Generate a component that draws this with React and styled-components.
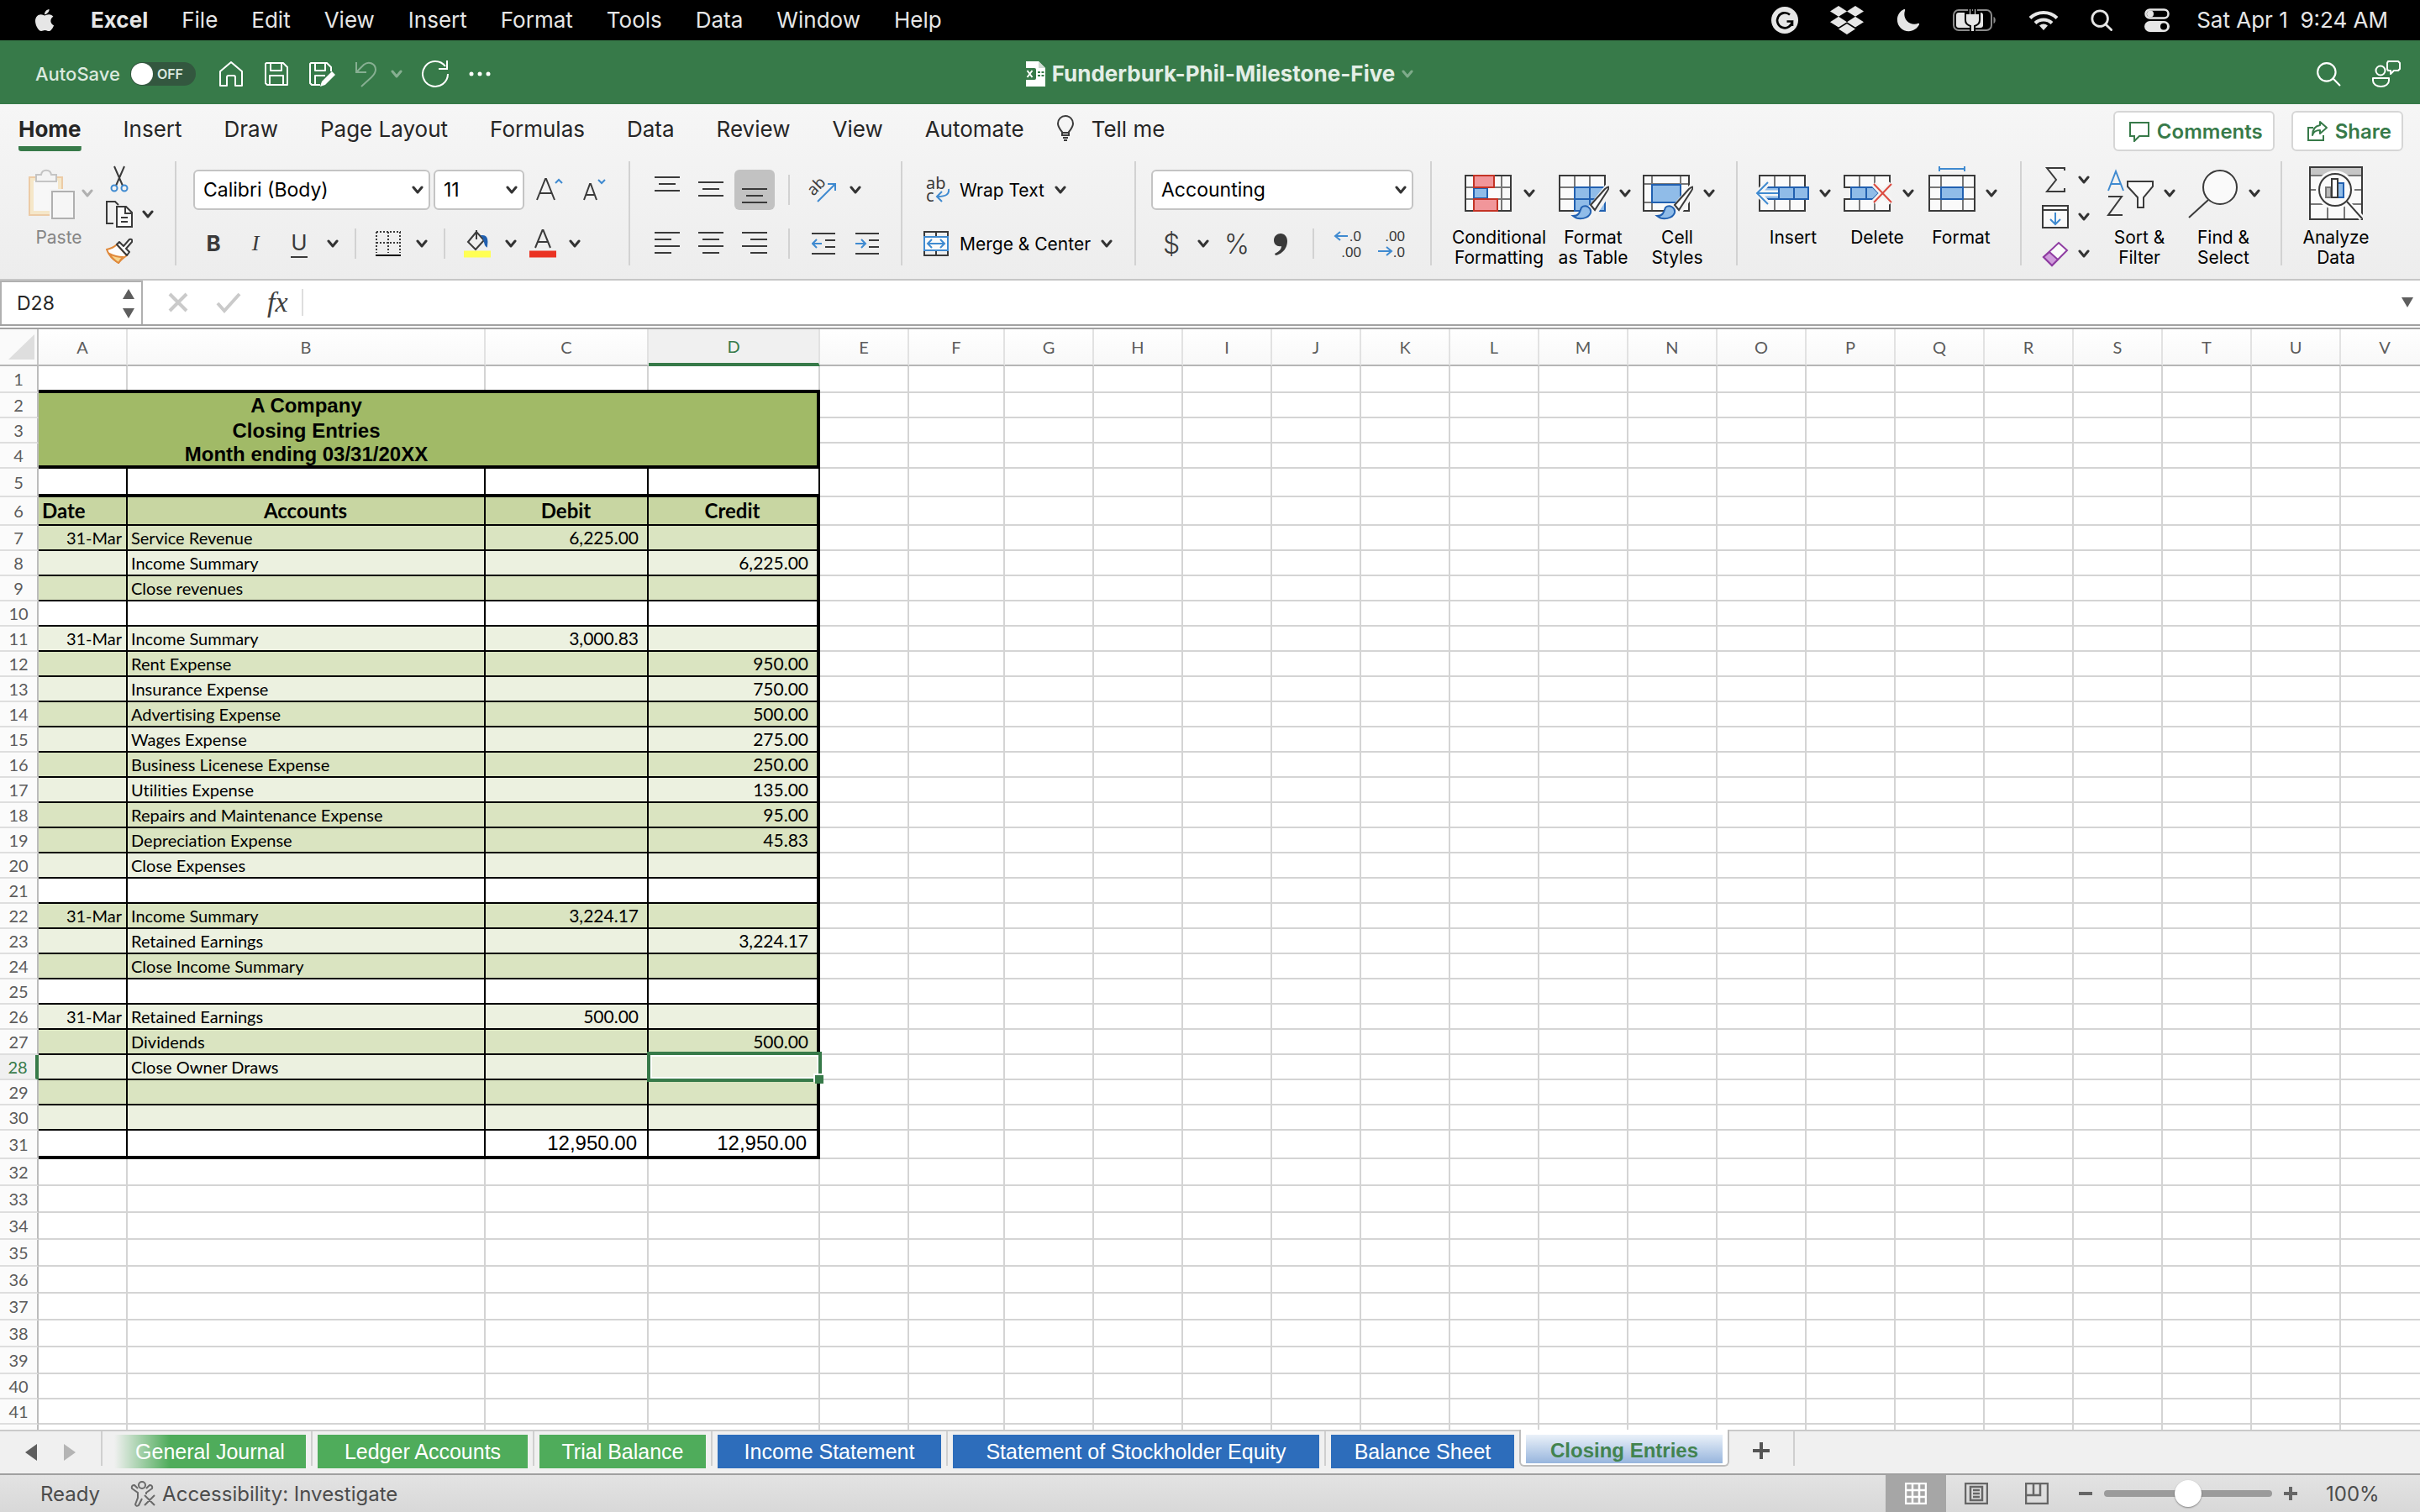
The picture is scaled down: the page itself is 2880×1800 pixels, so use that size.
import React from "react";
import styled, { createGlobalStyle, css } from "styled-components";
import { FaApple, FaDropbox } from "react-icons/fa";
import { IoMoon } from "react-icons/io5";

const ui = `Inter, "Liberation Sans", sans-serif`;
const calibri = `Lato, "Liberation Sans", sans-serif`;
const arial = `"Liberation Sans", Arial, sans-serif`;

const ink = "#3a3a3a";
const blue = "#3f8ad0";
const deepBlue = "#2160b0";
const paleBlue = "#90bce8";
const green = "#377a49";

const GlobalStyle = createGlobalStyle`
  * { box-sizing: border-box; }
  body { margin: 0; background: #fff; font-family: ${ui}; color: #262626; overflow: hidden; }
  button, input, select { font: inherit; color: inherit; }
  button { border: 0; padding: 0; background: none; }
  svg { display: block; flex: none; }
`;

const Page = styled.div`
  height: 100vh;
  display: flex;
  flex-direction: column;
`;

/* ---------- system menu bar ---------- */

const MenuBar = styled.nav`
  flex: none;
  height: 48px;
  padding: 0 38px 0 38px;
  display: flex;
  align-items: center;
  justify-content: space-between;
  background: #000;
  color: #e6e6e6;
  font-size: 26px;
`;

const MenuList = styled.div`
  display: flex;
  align-items: center;
  gap: 40px;
`;

const MenuItem = styled.button`
  line-height: 46px;
  font-weight: ${(p) => (p.$bold ? 700 : 400)};
`;

const StatusIcons = styled.div`
  display: flex;
  align-items: center;
  gap: 38px;
`;

const Clock = styled.time`
  margin-left: -6px;
  line-height: 46px;
  white-space: pre;
`;

/* ---------- window title bar ---------- */

const TitleBar = styled.header`
  flex: none;
  height: 76px;
  padding: 3px 22px 0 42px;
  display: grid;
  grid-template-columns: 1fr auto 1fr;
  align-items: center;
  background: ${green};
  color: #fff;
`;

const QuickAccess = styled.div`
  display: flex;
  align-items: center;
  gap: 22px;
`;

const AutoSave = styled.label`
  display: flex;
  align-items: center;
  gap: 12px;
  margin-right: 4px;
  font-size: 22px;
  font-weight: 500;
  color: #dbe9df;
`;

const SwitchBox = styled.span`
  display: grid;
  align-items: center;
  > * { grid-area: 1 / 1; }
`;

const Switch = styled.input`
  appearance: none;
  margin: 0;
  width: 78px;
  height: 28px;
  border-radius: 14px;
  background: #33573f;
  &::before {
    content: "";
    display: block;
    width: 26px;
    height: 26px;
    margin: 1px;
    border-radius: 50%;
    background: #fff;
  }
`;

const SwitchText = styled.span`
  padding-left: 32px;
  font-size: 16px;
  font-weight: 600;
`;

const IconButton = styled.button`
  display: flex;
  align-items: center;
  gap: ${(p) => p.$gap || 0}px;
  opacity: ${(p) => (p.$dim ? 0.4 : 1)};
`;

const DocTitle = styled.h1`
  margin: 0;
  display: flex;
  align-items: center;
  gap: 8px;
  font-size: 26px;
  font-weight: 700;
  color: #e3eee6;
`;

const TitleActions = styled.div`
  display: flex;
  justify-content: flex-end;
  align-items: center;
  gap: 36px;
`;

/* ---------- ribbon ---------- */

const RibbonShell = styled.section`
  flex: none;
  background: linear-gradient(#f6f6f6, #ededed);
  border-bottom: 2px solid #c6c6c6;
`;

const TabRow = styled.div`
  height: 68px;
  padding: 0 20px 0 22px;
  display: flex;
  align-items: flex-start;
  justify-content: space-between;
`;

const TabList = styled.div`
  display: flex;
  gap: 50px;
`;

const RibbonTab = styled.button`
  height: 56px;
  padding-top: 8px;
  display: flex;
  align-items: center;
  gap: 20px;
  font-size: 26px;
  border-bottom: 6px solid transparent;
  ${(p) =>
    p.$active &&
    css`
      font-weight: 700;
      background: linear-gradient(${green}, ${green}) bottom / 100% 6px no-repeat;
      background-origin: border-box;
      border-radius: 3px;
    `}
`;

const TellMe = styled(RibbonTab)`
  margin-left: -12px;
`;

const TabActions = styled.div`
  display: flex;
  gap: 20px;
  padding-top: 8px;
`;

const OutlineButton = styled.button`
  height: 48px;
  padding: 0 12px 0 16px;
  display: flex;
  align-items: center;
  gap: 8px;
  border: 2px solid #d6d6d6;
  border-radius: 6px;
  background: #fff;
  color: ${green};
  font-size: 24px;
  font-weight: 600;
`;

const Ribbon = styled.div`
  display: flex;
  height: 140px;
`;

const Group = styled.div`
  width: ${(p) => p.$w}px;
  height: 124px;
  padding-left: ${(p) => p.$pad || 20}px;
  display: flex;
  gap: 4px;
  border-right: ${(p) => (p.$last ? 0 : 2)}px solid #d2d2d2;
  flex: none;
`;

const Stack = styled.div`
  padding-top: 10px;
  display: flex;
  flex-direction: column;
  gap: 16px;
`;

const Line = styled.div`
  height: 48px;
  display: flex;
  align-items: center;
  gap: ${(p) => p.$gap || 0}px;
`;

const Rule = styled.i`
  width: 2px;
  height: 36px;
  margin: 0 12px;
  background: #d2d2d2;
`;

const Tool = styled.button`
  width: ${(p) => p.$w || 48}px;
  height: 48px;
  display: flex;
  align-items: center;
  justify-content: center;
  border-radius: 6px;
  color: ${ink};
  background: ${(p) => (p.$on ? "#c2c2c2" : "none")};
`;

const Drop = styled(Tool)`
  width: 28px;
  height: 40px;
`;

const Letter = styled.span`
  font-size: 26px;
  line-height: 32px;
  color: ${ink};
  font-weight: ${(p) => (p.$bold ? 700 : 400)};
  font-style: ${(p) => (p.$italic ? "italic" : "normal")};
  font-family: ${(p) => (p.$italic ? `"Liberation Serif", serif` : ui)};
  border-bottom: ${(p) => (p.$line ? 2 : 0)}px solid ${ink};
`;

const Symbol = styled.span`
  font-size: 32px;
  font-weight: 300;
  color: ${ink};
`;

const SelectBox = styled.span`
  width: ${(p) => p.$w}px;
  display: grid;
  align-items: center;
  > * { grid-area: 1 / 1; }
  > svg { justify-self: end; margin-right: 8px; pointer-events: none; }
`;

const Select = styled.select`
  appearance: none;
  width: 100%;
  height: 48px;
  padding: 0 10px;
  border: 2px solid #c4c4c4;
  border-radius: 6px;
  background: #fff;
  color: #000;
  font-size: 23px;
`;

const TextTool = styled.button`
  height: 48px;
  padding-left: 4px;
  display: flex;
  align-items: center;
  gap: 12px;
  color: #000;
  font-size: 21px;
`;

const BigTool = styled.button`
  width: ${(p) => p.$w || 96}px;
  padding-top: 2px;
  display: flex;
  flex-direction: column;
  align-items: center;
  justify-content: flex-start;
  color: ${(p) => (p.$dim ? "#858585" : "#000")};
`;

const BigIcon = styled.span`
  height: 72px;
  display: flex;
  align-items: center;
  gap: ${(p) => (p.$tight ? 8 : 12)}px;
`;

const BigLabel = styled.span`
  margin-top: 5px;
  font-size: 21px;
  line-height: 24px;
  white-space: pre-line;
  text-align: center;
`;

const MiniColumn = styled.div`
  padding-top: 2px;
  margin-left: ${(p) => p.$ml || 0}px;
  display: flex;
  flex-direction: column;
  gap: 4px;
`;

const MiniRow = styled.div`
  height: 40px;
  display: flex;
  align-items: center;
  gap: 4px;
`;

/* ---------- formula bar ---------- */

const FormulaBar = styled.div`
  flex: none;
  height: 58px;
  display: flex;
  align-items: center;
  background: #fff;
  border-bottom: 6px double #a2a2a2;
`;

const NameBox = styled.div`
  width: 170px;
  height: 52px;
  display: flex;
  align-items: center;
  border: 2px solid #b0b0b0;
  border-bottom: 0;
`;

const NameInput = styled.input`
  width: 130px;
  padding: 0 0 0 18px;
  border: 0;
  font-size: 23px;
`;

const Fx = styled.span`
  font: italic 34px/40px "Liberation Serif", serif;
  color: #404040;
`;

const FormulaTools = styled.div`
  padding: 0 16px 0 28px;
  display: flex;
  align-items: center;
  gap: 30px;
  height: 32px;
  border-right: 2px solid #dedede;
`;

const FormulaInput = styled.input`
  flex: 1;
  height: 40px;
  border: 0;
  font-size: 22px;
  background: #fff;
`;

const ExpandButton = styled.button`
  padding: 0 8px;
`;

/* ---------- sheet ---------- */

const Viewport = styled.main`
  flex: 1;
  min-height: 0;
  overflow: hidden;
  background: #fff;
`;

const Sheet = styled.table`
  width: 2892px;
  table-layout: fixed;
  border-collapse: separate;
  border-spacing: 0;
`;

const Corner = styled.td`
  padding: 0;
  border-right: 2px solid #c4c4c4;
  border-bottom: 2px solid #b5b5b5;
  background: #fafafa;
  > svg { margin-left: 10px; }
`;

const ColHead = styled.th`
  height: 44px;
  padding: 0;
  font: 400 20px/38px ${calibri};
  color: ${(p) => (p.$on ? green : "#5c5c5c")};
  background: ${(p) => (p.$on ? "#f0f0f0" : "linear-gradient(#fff, #f8f8f8)")};
  border-right: 2px solid #e2e2e2;
  border-bottom: ${(p) => (p.$on ? `4px solid ${green}` : "2px solid #b5b5b5")};
`;

const RowHead = styled.th`
  padding: 0;
  text-align: center;
  font: 400 20px/24px ${calibri};
  color: ${(p) => (p.$on ? green : "#5c5c5c")};
  background: ${(p) => (p.$on ? "#f0f0f0" : "#fbfbfb")};
  border-right: ${(p) => (p.$on ? `4px solid ${green}` : "2px solid #bcbcbc")};
  border-bottom: 2px solid #dedede;
`;

const Row = styled.tr`
  height: ${(p) => p.$h}px;
`;

const Cell = styled.td`
  position: relative;
  padding: 0 5px 0 4px;
  font: 400 20px/26px ${calibri};
  font-variant-ligatures: none;
  color: #000;
  white-space: nowrap;
  text-align: ${(p) => p.$align || "left"};
  background: ${(p) => p.$fill || "#fff"};
  border-right: ${(p) => p.$right || "2px solid #d4d4d4"};
  border-bottom: ${(p) => p.$bottom || "2px solid #d4d4d4"};
  ${(p) => p.$money && "padding-right: 10px; font-size: 21px;"}
  ${(p) => p.$kind === "title" && `font: 700 24px/26px ${arial};`}
  ${(p) => p.$kind === "head" && `font: 700 24px/30px ${calibri};`}
  ${(p) => p.$kind === "total" && `font: 400 24px/28px ${arial}; padding-right: 12px;`}
`;

const Selection = styled.span`
  position: absolute;
  inset: -4px -6px -4px -2px;
  border: 4px solid ${green};
  box-shadow: inset 0 0 0 2px #fff;
  z-index: 1;
  &::after {
    content: "";
    position: absolute;
    right: -6px;
    bottom: -6px;
    width: 10px;
    height: 10px;
    background: ${green};
    box-shadow: -2px -2px 0 #fff;
  }
`;

/* ---------- sheet tabs ---------- */

const SheetBar = styled.div`
  flex: none;
  height: 54px;
  display: flex;
  align-items: flex-start;
  background: #f0f0f0;
  border-top: 2px solid #cacaca;
  border-bottom: 2px solid #a0a0a0;
`;

const SheetNav = styled.div`
  width: 122px;
  height: 41px;
  padding: 8px 30px 0 30px;
  display: flex;
  justify-content: space-between;
  align-items: center;
  border-right: 2px solid #cfcfcf;
`;

const TabSlot = styled.div`
  height: 41px;
  padding: 0 6px;
  border-right: 2px solid #cfcfcf;
  ${(p) => p.$first && "padding-left: 14px;"}
  ${(p) => p.$bare && "border-right: 0;"}
`;

const SheetTab = styled.button`
  width: ${(p) => p.$w}px;
  height: 40px;
  margin-top: 4px;
  font: 400 25px/40px ${arial};
  color: #fff;
  text-align: center;
  background: ${(p) => (p.$blue ? "#2d6dbb" : "#4fac5b")};
  ${(p) => p.$fade && "background: linear-gradient(to right, #f0f0f0, #4fac5b 66px);"}
`;

const ActiveSlot = styled.div`
  height: 44px;
  margin-top: -2px;
  padding: 6px 6px 4px;
  background: #fff;
  border: 2px solid #bdbdbd;
  border-top: 0;
  border-radius: 0 0 6px 6px;
`;

const ActiveTab = styled.button`
  width: 234px;
  height: 34px;
  padding-top: 4px;
  font: 700 24px/30px ${arial};
  color: #42834f;
  background: linear-gradient(#eaf1f9, #97b5dd);
`;

const AddSheet = styled.button`
  width: 78px;
  height: 41px;
  padding-top: 4px;
  display: flex;
  align-items: center;
  justify-content: center;
  border-right: 2px solid #cfcfcf;
`;

/* ---------- status bar ---------- */

const StatusBar = styled.footer`
  flex: none;
  height: 44px;
  padding: 0 48px;
  display: flex;
  justify-content: space-between;
  align-items: center;
  background: linear-gradient(#e3e3e3, #d8d8d8);
  color: #4c4c4c;
  font-size: 24px;
`;

const StatusLeft = styled.div`
  display: flex;
  align-items: center;
  gap: 36px;
`;

const StatusRight = styled.div`
  height: 44px;
  display: flex;
  align-items: center;
`;

const StatusButton = styled.button`
  display: flex;
  align-items: center;
  gap: 6px;
`;

const ViewButton = styled.button`
  width: 72px;
  height: 44px;
  display: flex;
  align-items: center;
  justify-content: center;
  background: ${(p) => (p.$on ? "#a6a6a6" : "none")};
`;

const ZoomStep = styled.button`
  width: 16px;
  margin: 0 14px;
`;

const ZoomSlider = styled.input`
  appearance: none;
  width: 200px;
  height: 8px;
  margin: 0;
  border-radius: 4px;
  background: #9b9b9b;
  &::-webkit-slider-thumb {
    appearance: none;
    width: 32px;
    height: 32px;
    border-radius: 50%;
    background: #fff;
    box-shadow: 0 1px 2px rgba(0, 0, 0, 0.4);
  }
`;

const ZoomValue = styled.output`
  width: 84px;
  padding-left: 20px;
`;

/* ---------- icons ---------- */

const Svg = ({ w = 32, h = 32, stroke = ink, sw = 2, children }) => (
  <svg width={w} height={h} viewBox={`0 0 ${w} ${h}`} fill="none" stroke={stroke} strokeWidth={sw} aria-hidden="true">
    {children}
  </svg>
);

const Chevron = ({ color = "#333", sw = 3 }) => (
  <Svg w={14} h={12} stroke={color} sw={sw}><path d="M2 3l5 6 5-6" strokeLinecap="round" strokeLinejoin="round" /></Svg>
);

const Lines = ({ rows }) => (
  <Svg w={30} h={32}>
    {rows.map(([x, y, n]) => <path key={y} d={`M${x} ${y}h${n}`} />)}
  </Svg>
);

const Triangle = ({ dir, color = "#5e5e5e" }) => {
  const d = { left: "M14 0v20L0 10z", right: "M0 0v20l14-10z" }[dir];
  return <svg width="14" height="20" viewBox="0 0 14 20" fill={color} aria-hidden="true"><path d={d} /></svg>;
};

const Grammarly = () => (
  <svg width="32" height="32" viewBox="0 0 32 32" aria-hidden="true">
    <circle cx="16" cy="16" r="16" fill="#e6e6e6" />
    <path d="M22 9.500A9 9 0 1 0 25 17.500h-6.500M25 17.500v5.500" fill="none" stroke="#000" strokeWidth="2.600" />
  </svg>
);

const Battery = () => (
  <svg width="52" height="28" viewBox="0 0 52 28" aria-hidden="true">
    <rect x="1" y="2" width="45" height="24" rx="6" fill="none" stroke="#8a8a8a" strokeWidth="2" />
    <path d="M48.500 10v8c3-1 3-7 0-8z" fill="#8a8a8a" />
    <rect x="4" y="5" width="32" height="18" rx="3" fill="#e6e6e6" />
    <path d="M19 0v6h-4v8c0 4 3 6 6 7v7h5v-7c3-1 6-3 6-7V6h-4V0h-3v6h-3V0z" fill="#e6e6e6" stroke="#000" strokeWidth="2" />
  </svg>
);

const Wifi = () => (
  <svg width="36" height="26" viewBox="0 0 36 26" fill="none" stroke="#e6e6e6" strokeWidth="4" aria-hidden="true">
    <path d="M2 10.500a23 23 0 0 1 32 0M8 16.500a14.500 14.500 0 0 1 20 0" />
    <path d="M18 25l-5-5.500a7.500 7.500 0 0 1 10 0z" fill="#e6e6e6" stroke="none" />
  </svg>
);

const Magnifier = ({ size = 28, sw = 3, color = "#e6e6e6" }) => (
  <svg width={size} height={size} viewBox="0 0 28 28" fill="none" stroke={color} strokeWidth={sw} strokeLinecap="round" aria-hidden="true">
    <circle cx="12" cy="12" r="10" /><path d="M19 19l7.500 7.500" />
  </svg>
);

const ControlCenter = () => (
  <svg width="30" height="28" viewBox="0 0 30 28" aria-hidden="true">
    <rect x="1.500" y="1.500" width="27" height="10" rx="5" fill="none" stroke="#e6e6e6" strokeWidth="2.500" />
    <circle cx="7" cy="6.500" r="4" fill="#e6e6e6" />
    <rect x="0" y="15" width="30" height="13" rx="6.500" fill="#e6e6e6" />
    <circle cx="23" cy="21.500" r="4" fill="#000" />
  </svg>
);

const w = "#fff";
const HomeIcon = () => <Svg stroke={w}><path d="M3 13L16 2l13 11v17h-8V20q0-2-2-2h-6q-2 0-2 2v10H3z" strokeLinejoin="round" /></Svg>;
const SaveIcon = () => <Svg stroke={w}><path d="M4 3h20l5 5v21H5l-2-2V4zM9 3v9h13V3M8 29V18h16v11" strokeLinejoin="round" /></Svg>;
const SaveAsIcon = () => (
  <Svg stroke={w}><path d="M14 29H4l-2-2V4l1-1h19l5 5v5M8 3v9h12V3M8 29V18h12" strokeLinejoin="round" /><path d="M28 13l4 4-12 12-6 2 2-6z" fill={w} stroke="none" /></Svg>
);
const UndoIcon = () => <Svg w={28} stroke={w}><path d="M3 2v12h12M3 14L12 5c6-5 14-1 14 6 0 4-2 6-5 9L9 31" /></Svg>;
const RedoIcon = () => <Svg w={34} h={34} stroke={w} sw={2}><path d="M29 8A15 15 0 1 0 32 17M31 1v10H21" /></Svg>;
const MoreIcon = () => <svg width="28" height="8" viewBox="0 0 28 8" fill="#fff" aria-hidden="true"><circle cx="4" cy="4" r="2.500" /><circle cx="14" cy="4" r="2.500" /><circle cx="24" cy="4" r="2.500" /></svg>;
const FileIcon = () => (
  <svg width="26" height="30" viewBox="0 0 26 30" aria-hidden="true">
    <path d="M3 0h15l8 8v22H3z" fill="#fff" /><path d="M18 0v8h8z" fill="#cfdcd2" />
    <rect x="0" y="8" width="15" height="14" rx="2" fill={green} />
    <path d="M4.500 11l6 8M10.500 11l-6 8" stroke="#fff" strokeWidth="2" />
    <path d="M17 12h3v2h-3zM21.500 12h3v2h-3zM17 16h3v2h-3zM21.500 16h3v2h-3z" fill={green} />
  </svg>
);
const PeopleIcon = () => (
  <Svg w={36} h={34} stroke={w}><circle cx="11" cy="13" r="5.500" /><path d="M2 22h19v3c0 4-4 7-9.500 7S2 29 2 25zM20 2h12l2 2v7l-2 2h-5l-4 4v-4h-3l-1-2V4z" strokeLinejoin="round" /></Svg>
);
const BulbIcon = () => (
  <Svg w={22} h={32}><path d="M7 24v-4C4 16 2 14 2 10a9 9 0 0 1 18 0c0 4-2 6-5 10v4zM7 21h8M8 27h6M9 30h4" /></Svg>
);
const CommentIcon = () => <Svg w={26} h={26} stroke={green}><path d="M2 3h22v16H13l-6 6v-6H2z" /></Svg>;
const ShareIcon = () => (
  <Svg w={26} h={26} stroke={green}><path d="M8 9H2v15h18v-6" /><path d="M16 2l8 7-8 7v-4c-5 0-8 2-9 6 0-7 3-11 9-12z" strokeLinejoin="round" /></Svg>
);

const PasteIcon = () => (
  <Svg w={60} h={72}>
    <path d="M6 17h39v45H6z" stroke="#eccba6" fill="#f5e7c9" />
    <path d="M11 21h29v36H11z" fill="#f7f7f7" stroke="none" />
    <path d="M14 22v-8h6c1-7 11-7 12 0h6v8z" fill="#f4f4f4" stroke="#c4c4c4" />
    <path d="M30 31h31v36H30z" fill="#f4f4f4" stroke="none" />
    <path d="M33 34h26v32H33z" fill="#f6f6f6" stroke="#b0b0b0" />
  </Svg>
);
const CutIcon = () => (
  <Svg><path d="M10 1l10 23M22 1L12 24" /><circle cx="10" cy="27" r="3.500" stroke={blue} /><circle cx="22" cy="27" r="3.500" stroke={blue} /></Svg>
);
const CopyIcon = () => (
  <Svg><path d="M9 27H1V1h10l4 4" /><path d="M13 7h11l7 7v17H13z" fill="#fafafa" /><path d="M23 7v8h8M18 20h8M18 25h8" /></Svg>
);
const PainterIcon = () => (
  <Svg>
    <path d="M13 9C10 12 6 14 1 15c2 6 7 12 14 16 3-4 6-6 10-9z" fill="#fdfdfd" stroke="#e08a3c" />
    <path d="M4 20c6 3 11 4 16 4l-5 7c-5-3-8-6-11-11z" fill="#f6d58f" stroke="#e08a3c" />
    <path d="M13 9l3-3 5 5 7-8q4-1 3 3l-7 8 4 4-3 4z" fill="#fafafa" strokeLinejoin="round" />
  </Svg>
);
const GrowFont = ({ down }) => (
  <Svg w={34} h={34}>{down
    ? <><path d="M4 29l7-19h1l7 19M7 23h9" /><path d="M21 5l4 4 4-4" stroke={blue} /></>
    : <><path d="M2 29L12 4h1l10 25M6 21h13" /><path d="M24 9l4-4 4 4" stroke={blue} /></>}
  </Svg>
);
const BorderIcon = () => (
  <Svg><path d="M2 2h29M2 15h29M2 2v25M16 2v25M30 2v25" strokeDasharray="2 2" /><path d="M1 30h30" stroke="#000" /></Svg>
);
const FillIcon = () => (
  <Svg w={34} h={34}><path d="M16 3L6 15l9 9 10-11zM16 1v11" /><path d="M23 8c6 0 6 6 5 12-3-2-1-8-5-12z" fill={deepBlue} stroke={deepBlue} /><path d="M1 25.500h32v8H1z" fill="#ffff54" stroke="none" /></Svg>
);
const FontColorIcon = () => (
  <Svg w={34} h={34}><path d="M8 22L16.500 1h1L26 22M11 15h12" /><path d="M1 25.500h32v8H1z" fill="#ea3323" stroke="none" /></Svg>
);
const OrientIcon = () => (
  <Svg w={44} h={48}>
    <text x="10" y="32" transform="rotate(-45 10 32)" fontFamily="Noto Sans" fontSize="19" fill={ink} stroke="none">ab</text>
    <path d="M15 38L35 18M27 17h9v8" stroke={blue} />
  </Svg>
);
const IndentIcon = ({ right }) => (
  <Svg w={28} h={32}><path d="M0 4h28M0 28h28M16 12h12M16 20h12" /><path d={right ? "M0 16h11M7 11l5 5-5 5" : "M1 16h11M6 11l-5 5 5 5"} stroke={blue} /></Svg>
);
const WrapIcon = () => (
  <Svg w={32} h={44}>
    <text fontFamily="Noto Sans" fontSize="20" fill={ink} stroke="none"><tspan x="4" y="21">ab</tspan><tspan x="4" y="36">c</tspan></text>
    <path d="M31 21c1 6-3 9-13 9M23 24l-6 6 6 6" stroke={blue} />
  </Svg>
);
const MergeIcon = () => (
  <Svg w={32} h={32}><path d="M2 2h28v28H2zM16 2v6M16 24v6" /><path d="M2 8h28v16H2z" fill="#fafafa" stroke={blue} /><path d="M6 16h20M11 11l-5 5 5 5M21 11l5 5-5 5" stroke={blue} /></Svg>
);
const CommaIcon = () => <svg width="20" height="28" viewBox="0 0 20 28" fill={ink} aria-hidden="true"><path d="M3 26c7-3 8-7 8-9-5 1-9-2-9-7s4-8 8-8c5 0 8 4 8 9 0 8-5 15-14 17z" /></svg>;
const DecimalIcon = ({ less }) => (
  <Svg w={34} h={38}>
    <text textAnchor="end" fontFamily="Liberation Sans" fontSize="17" fill={ink} stroke="none">
      <tspan x="33" y="16">{less ? ".00" : ".0"}</tspan>
      <tspan x="33" y="35">{less ? ".0" : ".00"}</tspan>
    </text>
    <path d={less ? "M1 28h15M11 23l6 5-6 5" : "M17 10H2M8 5l-6 5 6 5"} stroke={blue} />
  </Svg>
);

const Brush = () => (
  <>
    <path d="M28 63c6 2 9-1 10-5L62 28c3-3 6-1 4 3L48 58c-1 6-9 10-20 5z" fill="#f3f3f3" stroke="#f3f3f3" strokeWidth="6" />
    <path d="M42 50L59 31c5-4 6-3 3 2L47 56z" fill="#fafafa" />
    <path d="M21 63c7 0 8-4 10-10 5-4 12 0 11 6-2 7-14 10-21 4z" fill={paleBlue} stroke={deepBlue} />
  </>
);
const CondFormatIcon = () => (
  <Svg w={60} h={72}>
    <path d="M3 15h54v42H3zM13 15v42M46 15v42M3 29h54M3 43h54" fill="#fafafa" stroke="#777" />
    <path d="M3 15h54v42H3z" />
    <path d="M13 30h16v12H13z" fill={paleBlue} stroke={deepBlue} />
    <path d="M13 15h24v14H13zM13 43h28v14H13z" fill="#f1969a" stroke="#c43426" />
  </Svg>
);
const TableFormatIcon = () => (
  <Svg w={64} h={72}>
    <path d="M5 15h54v42H5zM23 15v42M41 15v42M5 29h54M5 43h54" fill="#fafafa" stroke="#777" />
    <path d="M5 15h54v42H5z" />
    <path d="M23 29h36v28H23zM41 29v28M23 43h36" fill={paleBlue} stroke={deepBlue} />
    <Brush />
  </Svg>
);
const CellStyleIcon = () => (
  <Svg w={64} h={72}>
    <path d="M5 15h54v42H5zM15 15v42M49 15v42M5 25h54M5 47h54" fill="#fafafa" stroke="#777" />
    <path d="M5 15h54v42H5z" />
    <path d="M15 26h34v21H15z" fill={paleBlue} stroke={deepBlue} />
    <Brush />
  </Svg>
);
const InsertCellsIcon = () => (
  <Svg w={64} h={72}>
    <path d="M5 15h54v42H5zM23 15v42M41 15v42" fill="#fafafa" stroke="#777" /><path d="M5 15h54v42H5z" />
    <path d="M8 29h55v14H8zM28 29v14M46 29v14" fill={paleBlue} stroke={deepBlue} />
    <path d="M16 22L3 36l13 14M3 36h24" stroke="#f6f6f6" strokeWidth="7" /><path d="M15 23L2 36l13 13M2 36h25" stroke={blue} />
  </Svg>
);
const DeleteCellsIcon = () => (
  <Svg w={62} h={72}>
    <path d="M5 15h54v42H5zM23 15v42M41 15v42" fill="#fafafa" stroke="#777" /><path d="M5 15h54v42H5z" />
    <path d="M3 30h60v12H3z" fill="#f2f2f2" stroke="none" />
    <path d="M5 29h8M5 43h8" /><path d="M13 29h26l7 7-7 7H13zM31 29v14" fill={paleBlue} stroke={deepBlue} />
    <path d="M40 25l21 22M61 25L40 47" stroke="#f4f4f4" strokeWidth="7" /><path d="M40 25l21 22M61 25L40 47" stroke="#dc4b40" />
  </Svg>
);
const FormatCellsIcon = () => (
  <Svg w={60} h={72}>
    <path d="M5 15h54v42H5zM19 15v42M45 15v42M5 29h54M5 43h54" fill="#fafafa" stroke="#777" /><path d="M5 15h54v42H5z" />
    <path d="M19 29h26v14H19z" fill={paleBlue} stroke={deepBlue} /><path d="M17 7h30M17 4v6M47 4v6" stroke={blue} />
  </Svg>
);
const SumIcon = () => <Svg><path d="M27 5V2H6l11 14L6 30h21v-4" /></Svg>;
const FillDownIcon = () => <Svg><path d="M1 3h30v26H1z" fill="#fafafa" /><path d="M1 8h30" /><path d="M16 11v14M10 19l6 6 6-6" stroke={blue} /></Svg>;
const EraserIcon = () => <Svg stroke="#8f3da2"><path d="M20 3l10 9-18 18-10-10z" fill="#fafafa" /><path d="M9 14l10 9-7 7L2 20z" fill="#cf9bdb" /></Svg>;
const SortIcon = () => (
  <Svg w={60} h={72}><path d="M6 33l9-23 9 23M9 25h12" stroke={blue} /><path d="M6 40h16L6 62h17" /><path d="M29 22h30v6L48 41v12h-7V41L29 28z" fill="#fafafa" /></Svg>
);
const FindIcon = () => <Svg w={62} h={72}><circle cx="40" cy="29" r="20" fill="#fafafa" /><path d="M26 44L3 65" /></Svg>;
const AnalyzeIcon = () => (
  <Svg w={64} h={72}>
    <path d="M1 5h62v62H1z" fill="#fafafa" /><path d="M2 6h60v9H2z" fill="#c6c6c6" stroke="none" /><path d="M1 15h62M1 32h62M1 49h62M22 49v18M42 49v18" stroke="#777" />
    <path d="M1 5h62v62H1z" />
    <circle cx="31" cy="32" r="23" fill="#fafafa" stroke="none" /><circle cx="31" cy="32" r="19" fill="#fafafa" /><path d="M45 47l18 19" stroke="#fafafa" strokeWidth="7" /><path d="M45 46l18 20" />
    <path d="M20 29h6v12h-6z" fill="#bbb" stroke="#777" /><path d="M34 24h7v17h-7z" fill={paleBlue} stroke={deepBlue} /><path d="M27 19h7v22h-7z" fill="#fff" />
  </Svg>
);
const AccessIcon = () => (
  <Svg w={32} h={32} stroke="#6a6a6a"><circle cx="14" cy="6" r="4" /><path d="M9 10L5 6q-4 0-3 4l7 5v6l-3 8q1 3 4 1l4-8M19 10l4-4q4 0 3 4l-7 5v2M17 18l12 12M29 18L17 30" /></Svg>
);

/* ---------- data ---------- */

const columns = [106, 426, 194, 204, 106, 114, ...Array(16).fill(106)];
const letters = "ABCDEFGHIJKLMNOPQRSTUV".split("");
const dark = "#dae4c1";
const light = "#ecf1e0";

const entries = {
  7: [dark, "31-Mar", "Service Revenue", "6,225.00", ""],
  8: [light, "", "Income Summary", "", "6,225.00"],
  9: [dark, "", "Close revenues", "", ""],
  10: ["#fff", "", "", "", ""],
  11: [light, "31-Mar", "Income Summary", "3,000.83", ""],
  12: [dark, "", "Rent Expense", "", "950.00"],
  13: [light, "", "Insurance Expense", "", "750.00"],
  14: [dark, "", "Advertising Expense", "", "500.00"],
  15: [light, "", "Wages Expense", "", "275.00"],
  16: [dark, "", "Business Licenese Expense", "", "250.00"],
  17: [light, "", "Utilities Expense", "", "135.00"],
  18: [dark, "", "Repairs and Maintenance Expense", "", "95.00"],
  19: [dark, "", "Depreciation Expense", "", "45.83"],
  20: [light, "", "Close Expenses", "", ""],
  21: ["#fff", "", "", "", ""],
  22: [dark, "31-Mar", "Income Summary", "3,224.17", ""],
  23: [light, "", "Retained Earnings", "", "3,224.17"],
  24: [dark, "", "Close Income Summary", "", ""],
  25: ["#fff", "", "", "", ""],
  26: [light, "31-Mar", "Retained Earnings", "500.00", ""],
  27: [dark, "", "Dividends", "", "500.00"],
  28: [light, "", "Close Owner Draws", "", ""],
  29: [dark, "", "", "", ""],
  30: [light, "", "", "", ""],
  31: ["#fff", "", "", "12,950.00", "12,950.00"],
};

const titles = { 2: "A Company", 3: "Closing Entries", 4: "Month ending 03/31/20XX" };
const headings = ["Date", "Accounts", "Debit", "Credit"];

const rowHeight = (n) => {
  if (n === 1) return 32;
  if (n === 5 || n === 6 || n === 31) return 34;
  if (n >= 32 && n <= 39) return 32;
  return 30;
};

const thick = "4px solid #000";
const thin = "2px solid #000";
const edgeLine = (color) => `linear-gradient(${color}, ${color}) right / 2px 100% no-repeat #fff`;

function ledgerCell(n, c) {
  if (n === 1) return { $right: "0", $fill: edgeLine("#d4d4d4"), $bottom: thick };
  if (n <= 4) {
    return {
      $kind: "title", $fill: "#a1ba67", $align: "center",
      $right: c === 3 ? thick : "0", $bottom: n === 4 ? thick : "0",
      children: c === 1 ? titles[n] : null,
    };
  }
  if (n === 5) return { $right: thin, $bottom: thick };
  const $right = c === 3 ? thick : thin;
  if (n === 6) {
    return { $kind: "head", $fill: "#c8d6a2", $align: c ? "center" : "left", $right, $bottom: thin, children: headings[c] };
  }
  const [fill, ...values] = entries[n];
  return {
    $kind: n === 31 ? "total" : "body", $fill: fill, $align: c === 1 ? "left" : "right", $money: c > 1,
    $right, $bottom: n === 31 ? thick : thin, children: values[c],
  };
}

const sheets = [
  { name: "General Journal", w: 228, first: true },
  { name: "Ledger Accounts", w: 250 },
  { name: "Trial Balance", w: 198 },
  { name: "Income Statement", w: 266, blue: true },
  { name: "Statement of Stockholder Equity", w: 436, blue: true },
  { name: "Balance Sheet", w: 218, blue: true, last: true },
];

const menus = ["File", "Edit", "View", "Insert", "Format", "Tools", "Data", "Window", "Help"];
const tabs = ["Insert", "Draw", "Page Layout", "Formulas", "Data", "Review", "View", "Automate"];

/* ---------- composed parts ---------- */

const DropButton = ({ label }) => <Drop aria-label={label}><Chevron /></Drop>;

const Picker = ({ label, value, width }) => (
  <SelectBox $w={width}>
    <Select aria-label={label} defaultValue={value}><option>{value}</option></Select>
    <Chevron />
  </SelectBox>
);

const Big = ({ icon, label, width, noDrop, dim }) => (
  <BigTool $w={width} $dim={dim}>
    <BigIcon $tight={dim}>{icon}{!noDrop && <Chevron color={dim ? "#b0b0b0" : undefined} />}</BigIcon>
    <BigLabel>{label}</BigLabel>
  </BigTool>
);

function RibbonPanel() {
  return (
    <Ribbon>
      <Group $w={210} $pad={26}>
        <Big icon={<PasteIcon />} label="Paste" width={88} dim />
        <MiniColumn $ml={8}>
          <MiniRow><IconButton aria-label="Cut"><CutIcon /></IconButton></MiniRow>
          <MiniRow><IconButton aria-label="Copy"><CopyIcon /></IconButton><DropButton label="Copy options" /></MiniRow>
          <MiniRow><IconButton aria-label="Format painter"><PainterIcon /></IconButton></MiniRow>
        </MiniColumn>
      </Group>
      <Group $w={540}>
        <Stack>
          <Line $gap={4}>
            <Picker label="Font" value="Calibri (Body)" width={282} />
            <Picker label="Font size" value="11" width={108} />
            <Tool aria-label="Increase font size" $w={52}><GrowFont /></Tool>
            <Tool aria-label="Decrease font size"><GrowFont down /></Tool>
          </Line>
          <Line>
            <Tool><Letter $bold>B</Letter></Tool>
            <Tool $w={52}><Letter $italic>I</Letter></Tool>
            <Tool $w={52}><Letter $line>U</Letter></Tool>
            <DropButton label="Underline options" />
            <Rule />
            <Tool aria-label="Borders" $w={52}><BorderIcon /></Tool>
            <DropButton label="Border options" />
            <Rule />
            <Tool aria-label="Fill color" $w={52}><FillIcon /></Tool>
            <DropButton label="Fill options" />
            <Tool aria-label="Font color"><FontColorIcon /></Tool>
            <DropButton label="Font color options" />
          </Line>
        </Stack>
      </Group>
      <Group $w={324}>
        <Stack>
          <Line $gap={4}>
            <Tool aria-label="Top align"><Lines rows={[[0, 1, 30], [5, 9, 20], [0, 17, 30]]} /></Tool>
            <Tool aria-label="Middle align"><Lines rows={[[0, 7, 30], [5, 15, 20], [0, 23, 30]]} /></Tool>
            <Tool aria-label="Bottom align" $on><Lines rows={[[0, 15, 30], [5, 23, 20], [0, 31, 30]]} /></Tool>
            <Rule />
            <Line>
              <Tool aria-label="Orientation"><OrientIcon /></Tool>
              <DropButton label="Orientation options" />
            </Line>
          </Line>
          <Line $gap={4}>
            <Tool aria-label="Align left"><Lines rows={[[0, 3, 30], [0, 11, 20], [0, 19, 30], [0, 27, 20]]} /></Tool>
            <Tool aria-label="Center"><Lines rows={[[0, 3, 30], [5, 11, 20], [0, 19, 30], [5, 27, 20]]} /></Tool>
            <Tool aria-label="Align right"><Lines rows={[[0, 3, 30], [10, 11, 20], [0, 19, 30], [10, 27, 20]]} /></Tool>
            <Rule />
            <Tool aria-label="Decrease indent"><IndentIcon /></Tool>
            <Tool aria-label="Increase indent"><IndentIcon right /></Tool>
          </Line>
        </Stack>
      </Group>
      <Group $w={278}>
        <Stack>
          <TextTool><WrapIcon />Wrap Text<Chevron /></TextTool>
          <TextTool><MergeIcon />Merge &amp; Center<Chevron /></TextTool>
        </Stack>
      </Group>
      <Group $w={352} $pad={18}>
        <Stack>
          <Picker label="Number format" value="Accounting" width={312} />
          <Line>
            <Tool><Symbol>$</Symbol></Tool>
            <DropButton label="Currency options" />
            <Tool $w={52}><Symbol>%</Symbol></Tool>
            <Tool aria-label="Comma style" $w={52}><CommaIcon /></Tool>
            <Rule />
            <Tool aria-label="Increase decimal" $w={56}><DecimalIcon /></Tool>
            <Tool aria-label="Decrease decimal"><DecimalIcon less /></Tool>
          </Line>
        </Stack>
      </Group>
      <Group $w={364}>
        <Big icon={<CondFormatIcon />} label={"Conditional\nFormatting"} width={120} />
        <Big icon={<TableFormatIcon />} label={"Format\nas Table"} />
        <Big icon={<CellStyleIcon />} label={"Cell\nStyles"} />
      </Group>
      <Group $w={338} $pad={18}>
        <Big icon={<InsertCellsIcon />} label="Insert" />
        <Big icon={<DeleteCellsIcon />} label="Delete" />
        <Big icon={<FormatCellsIcon />} label="Format" />
      </Group>
      <Group $w={310} $pad={24}>
        <MiniColumn>
          <MiniRow><IconButton aria-label="AutoSum"><SumIcon /></IconButton><DropButton label="AutoSum options" /></MiniRow>
          <MiniRow><IconButton aria-label="Fill"><FillDownIcon /></IconButton><DropButton label="Fill down options" /></MiniRow>
          <MiniRow><IconButton aria-label="Clear"><EraserIcon /></IconButton><DropButton label="Clear options" /></MiniRow>
        </MiniColumn>
        <Big icon={<SortIcon />} label={"Sort &\nFilter"} />
        <Big icon={<FindIcon />} label={"Find &\nSelect"} />
      </Group>
      <Group $w={120} $pad={16} $last>
        <Big icon={<AnalyzeIcon />} label={"Analyze\nData"} noDrop />
      </Group>
    </Ribbon>
  );
}

function Grid() {
  const rows = Array.from({ length: 42 }, (_, i) => i + 1);
  return (
    <Sheet>
      <colgroup>
        <col width={46} />
        {columns.map((width, i) => <col key={i} width={width} />)}
      </colgroup>
      <thead>
        <tr>
          <Corner><svg width="32" height="32" viewBox="0 0 32 32" aria-hidden="true"><path d="M31 1v30H0z" fill="#dedede" /></svg></Corner>
          {letters.map((l) => <ColHead key={l} scope="col" $on={l === "D"}>{l}</ColHead>)}
        </tr>
      </thead>
      <tbody>
        {rows.map((n) => (
          <Row key={n} $h={rowHeight(n)}>
            <RowHead scope="row" $on={n === 28}>{n < 42 ? n : null}</RowHead>
            {letters.map((l, c) => {
              const { children, ...look } = c < 4 && n <= 31 ? ledgerCell(n, c) : {};
              return <Cell key={l} {...look}>{children}{n === 28 && l === "D" && <Selection />}</Cell>;
            })}
          </Row>
        ))}
      </tbody>
    </Sheet>
  );
}

export default function App() {
  return (
    <Page>
      <GlobalStyle />
      <MenuBar>
        <MenuList>
          <FaApple size={30} />
          <MenuItem $bold>Excel</MenuItem>
          {menus.map((m) => <MenuItem key={m}>{m}</MenuItem>)}
        </MenuList>
        <StatusIcons>
          <Grammarly />
          <FaDropbox size={40} />
          <IoMoon size={30} />
          <Battery />
          <Wifi />
          <Magnifier size={26} />
          <ControlCenter />
          <Clock>{"Sat Apr 1  9:24 AM"}</Clock>
        </StatusIcons>
      </MenuBar>

      <TitleBar>
        <QuickAccess>
          <AutoSave htmlFor="autosave">
            AutoSave
            <SwitchBox><Switch id="autosave" type="checkbox" /><SwitchText>OFF</SwitchText></SwitchBox>
          </AutoSave>
          <IconButton aria-label="Home"><HomeIcon /></IconButton>
          <IconButton aria-label="Save"><SaveIcon /></IconButton>
          <IconButton aria-label="Save as"><SaveAsIcon /></IconButton>
          <IconButton aria-label="Undo" $dim $gap={16}><UndoIcon /><Chevron color="#fff" /></IconButton>
          <IconButton aria-label="Redo"><RedoIcon /></IconButton>
          <IconButton aria-label="More"><MoreIcon /></IconButton>
        </QuickAccess>
        <DocTitle><FileIcon />Funderburk-Phil-Milestone-Five<Chevron color="#7fab8b" /></DocTitle>
        <TitleActions>
          <IconButton aria-label="Search"><Magnifier size={30} sw={2} color="#fff" /></IconButton>
          <IconButton aria-label="Presence"><PeopleIcon /></IconButton>
        </TitleActions>
      </TitleBar>

      <RibbonShell>
        <TabRow>
          <TabList>
            <RibbonTab $active>Home</RibbonTab>
            {tabs.map((t) => <RibbonTab key={t}>{t}</RibbonTab>)}
            <TellMe><BulbIcon />Tell me</TellMe>
          </TabList>
          <TabActions>
            <OutlineButton><CommentIcon />Comments</OutlineButton>
            <OutlineButton><ShareIcon />Share</OutlineButton>
          </TabActions>
        </TabRow>
        <RibbonPanel />
      </RibbonShell>

      <FormulaBar>
        <NameBox>
          <NameInput aria-label="Name box" defaultValue="D28" />
          <svg width="40" height="40" viewBox="0 0 40 40" fill="#5e5e5e" aria-hidden="true"><path d="M14 15l7-12 7 12zM14 26l7 12 7-12z" /></svg>
        </NameBox>
        <FormulaTools>
          <IconButton aria-label="Cancel"><Svg w={28} h={26} stroke="#cacaca" sw={4}><path d="M4 3l20 20M24 3L4 23" /></Svg></IconButton>
          <IconButton aria-label="Enter"><Svg w={32} h={26} stroke="#cacaca" sw={4}><path d="M3 14l8 9L29 3" /></Svg></IconButton>
          <Fx>fx</Fx>
        </FormulaTools>
        <FormulaInput aria-label="Formula" />
        <ExpandButton aria-label="Expand formula bar"><svg width="14" height="12" viewBox="0 0 14 12" fill="#5e5e5e" aria-hidden="true"><path d="M0 0h14L7 12z" /></svg></ExpandButton>
      </FormulaBar>

      <Viewport><Grid /></Viewport>

      <SheetBar>
        <SheetNav>
          <IconButton aria-label="Previous sheet"><Triangle dir="left" /></IconButton>
          <IconButton aria-label="Next sheet"><Triangle dir="right" color="#b4b4b4" /></IconButton>
        </SheetNav>
        {sheets.map((s) => (
          <TabSlot key={s.name} $first={s.first} $bare={s.last}>
            <SheetTab $w={s.w} $blue={s.blue} $fade={s.first}>{s.name}</SheetTab>
          </TabSlot>
        ))}
        <ActiveSlot><ActiveTab>Closing Entries</ActiveTab></ActiveSlot>
        <AddSheet aria-label="Add sheet"><Svg w={20} h={20} stroke="#555" sw={4}><path d="M10 0v20M0 10h20" /></Svg></AddSheet>
      </SheetBar>

      <StatusBar>
        <StatusLeft>
          <span>Ready</span>
          <StatusButton><AccessIcon />Accessibility: Investigate</StatusButton>
        </StatusLeft>
        <StatusRight>
          <ViewButton $on aria-label="Normal view">
            <Svg w={26} h={26} stroke="#fff" sw={2.5}><path d="M1 1h24v24H1zM9 1v24M17 1v24M1 9h24M1 17h24" /></Svg>
          </ViewButton>
          <ViewButton aria-label="Page layout view">
            <Svg w={28} h={26} stroke="#666" sw={2.5}><path d="M1 1h26v24H1zM7 5h14v16H7zM10 9h8M10 13h8M10 17h8" /></Svg>
          </ViewButton>
          <ViewButton aria-label="Page break view">
            <Svg w={28} h={26} stroke="#666" sw={2.5}><path d="M1 1h26v24H1zM1 15h17V1M10 1v14" /></Svg>
          </ViewButton>
          <ZoomStep aria-label="Zoom out"><Svg w={16} h={16} stroke="#666" sw={4}><path d="M0 8h16" /></Svg></ZoomStep>
          <ZoomSlider type="range" aria-label="Zoom" defaultValue={50} />
          <ZoomStep aria-label="Zoom in"><Svg w={16} h={16} stroke="#666" sw={4}><path d="M0 8h16M8 0v16" /></Svg></ZoomStep>
          <ZoomValue>100%</ZoomValue>
        </StatusRight>
      </StatusBar>
    </Page>
  );
}
